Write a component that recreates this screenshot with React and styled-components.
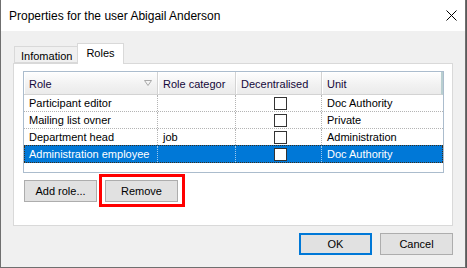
import React from "react";
import styled, { createGlobalStyle } from "styled-components";

const Global = createGlobalStyle`
  * { box-sizing: border-box; }
  html, body { margin: 0; padding: 0; background: #5a5a5a; }
  body { font-family: "Liberation Sans", Arial, sans-serif; font-size: 11px; color: #000; }
`;

const Window = styled.div`
  width: 466px;
  height: 268px;
  display: flex;
  flex-direction: column;
  background: #f0f0f0;
  border: 1px solid #6f6f6f;
  border-top: none;
`;

const TitleBar = styled.div`
  height: 31px;
  flex: none;
  background: #fff;
  display: flex;
  align-items: center;
  justify-content: space-between;
  padding: 0 8px 0 8px;
`;

const Title = styled.div`
  font-size: 12px;
  color: #000;
  padding-top: 1px;
`;

const CloseButton = styled.div`
  width: 12px;
  height: 12px;
  margin-right: 0px;
  display: flex;
  align-items: center;
  justify-content: center;
  svg { display: block; }
`;

const Body = styled.div`
  flex: 1;
  display: flex;
  flex-direction: column;
  padding: 12px 12px 0 12px;
`;

const TabStrip = styled.div`
  height: 20px;
  display: flex;
  align-items: flex-end;
  padding-left: 1px;
  position: relative;
  z-index: 1;
`;

const Tab = styled.div`
  height: ${(p) => (p.$active ? "21px" : "17px")};
  margin-bottom: ${(p) => (p.$active ? "-1px" : "0")};
  padding: ${(p) => (p.$active ? "2px 8px 0 8px" : "2px 5px 0 6px")};
  background: ${(p) => (p.$active ? "#fff" : "#f0f0f0")};
  border: 1px solid #d9d9d9;
  border-bottom: ${(p) => (p.$active ? "none" : "1px solid #d9d9d9")};
  margin-left: ${(p) => (p.$active ? "-1px" : "0")};
  line-height: 14px;
`;

const TabPanel = styled.div`
  width: 440px;
  height: 163px;
  background: #fff;
  border: 1px solid #d9d9d9;
  padding: 7px 0 0 9px;
  display: flex;
  flex-direction: column;
`;

const Grid = styled.div`
  width: 421px;
  height: 102px;
  border: 1px solid #abbccd;
  background: #fff;
`;

const cols = "134px 78px 86px 121px";

const HeaderRow = styled.div`
  display: grid;
  grid-template-columns: ${cols};
  height: 23px;
`;

const HeaderCell = styled.div`
  position: relative;
  background: linear-gradient(#fefefe, #f1f1f1 60%, #ebebeb);
  border-right: 1px solid #d3d3d3;
  border-bottom: 1px solid #d3d3d3;
  box-shadow: inset 1px 1px 0 #fff;
  padding: 5px 0 0 5px;
  line-height: 14px;
  color: #14083a;
  white-space: nowrap;
  overflow: hidden;
  &:last-child { border-right: 2px solid #b9cfd0; }
`;

const SortGlyph = styled.svg`
  position: absolute;
  right: 5px;
  top: 8px;
`;

const Row = styled.div`
  display: grid;
  grid-template-columns: ${cols};
  height: 17px;
  background: ${(p) => (p.$selected ? "#0078d7" : "#fff")};
  color: ${(p) => (p.$selected ? "#fff" : "#000")};
  border-bottom: 1px dotted ${(p) => (p.$selected ? "#3b2d1a" : "#b4b4b4")};
  border-top: ${(p) => (p.$selected ? "1px dotted #3b2d1a" : "none")};
  margin-top: ${(p) => (p.$selected ? "-1px" : "0")};
  height: ${(p) => (p.$selected ? "18px" : "17px")};
`;

const Cell = styled.div`
  padding: 0 0 0 5px;
  line-height: 16px;
  white-space: nowrap;
  overflow: hidden;
  border-right: 1px dotted ${(p) => (p.$selected ? "#9cc8ee" : "#b4b4b4")};
  display: flex;
  align-items: center;
  justify-content: ${(p) => (p.$center ? "center" : "flex-start")};
  &:first-child { border-left: ${(p) => (p.$selected ? "1px dotted #3b2d1a" : "none")}; padding-left: ${(p) => (p.$selected ? "4px" : "5px")}; }
  &:last-child { border-right: ${(p) => (p.$selected ? "1px dotted #3b2d1a" : "none")}; }
`;

const CheckBox = styled.span`
  display: block;
  width: 13px;
  height: 13px;
  border: 1px solid #333;
  background: #fff;
  margin-left: -1px;
`;

const ButtonRow = styled.div`
  display: flex;
  gap: 8px;
  margin-top: 7px;
  padding-left: 1px;
`;

const Button = styled.div`
  position: relative;
  width: 73px;
  height: 22px;
  display: flex;
  align-items: center;
  justify-content: center;
  background: #e1e1e1;
  border: ${(p) => (p.$default ? "2px solid #0078d7" : "1px solid #adadad")};
  color: #000;
  font-size: 11px;
  ${(p) =>
    p.$marked &&
    `&::after {
      content: "";
      position: absolute;
      left: -7px;
      top: -7px;
      right: -8px;
      bottom: -6px;
      border: 3px solid #f00;
    }`}
`;

const Footer = styled.div`
  display: flex;
  justify-content: flex-end;
  gap: 8px;
  margin-top: 7px;
`;

const rows = [
  { role: "Participant editor", cat: "", unit: "Doc Authority" },
  { role: "Mailing list ovner", cat: "", unit: "Private" },
  { role: "Department head", cat: "job", unit: "Administration" },
  { role: "Administration employee", cat: "", unit: "Doc Authority", selected: true },
];

export default function App() {
  return (
    <>
      <Global />
      <Window>
        <TitleBar>
          <Title>Properties for the user Abigail Anderson</Title>
          <CloseButton>
            <svg width="11" height="11" viewBox="0 0 11 11">
              <path d="M0.5 0.5 L10.5 10.5 M10.5 0.5 L0.5 10.5" stroke="#000" strokeWidth="1" fill="none" />
            </svg>
          </CloseButton>
        </TitleBar>
        <Body>
          <TabStrip>
            <Tab>Infomation</Tab>
            <Tab $active>Roles</Tab>
          </TabStrip>
          <TabPanel>
            <Grid>
              <HeaderRow>
                <HeaderCell>
                  Role
                  <SortGlyph width="8" height="6" viewBox="0 0 8 6">
                    <path d="M0.5 0.5 L7.5 0.5 L4 5.5 Z" fill="none" stroke="#a8a8a8" strokeWidth="1" />
                  </SortGlyph>
                </HeaderCell>
                <HeaderCell>Role categor</HeaderCell>
                <HeaderCell>Decentralised</HeaderCell>
                <HeaderCell>Unit</HeaderCell>
              </HeaderRow>
              {rows.map((r) => (
                <Row key={r.role} $selected={r.selected}>
                  <Cell $selected={r.selected}>{r.role}</Cell>
                  <Cell $selected={r.selected}>{r.cat}</Cell>
                  <Cell $selected={r.selected} $center>
                    <CheckBox />
                  </Cell>
                  <Cell $selected={r.selected}>{r.unit}</Cell>
                </Row>
              ))}
            </Grid>
            <ButtonRow>
              <Button>Add role...</Button>
              <Button $marked>Remove</Button>
            </ButtonRow>
          </TabPanel>
          <Footer>
            <Button $default>OK</Button>
            <Button>Cancel</Button>
          </Footer>
        </Body>
      </Window>
    </>
  );
}
